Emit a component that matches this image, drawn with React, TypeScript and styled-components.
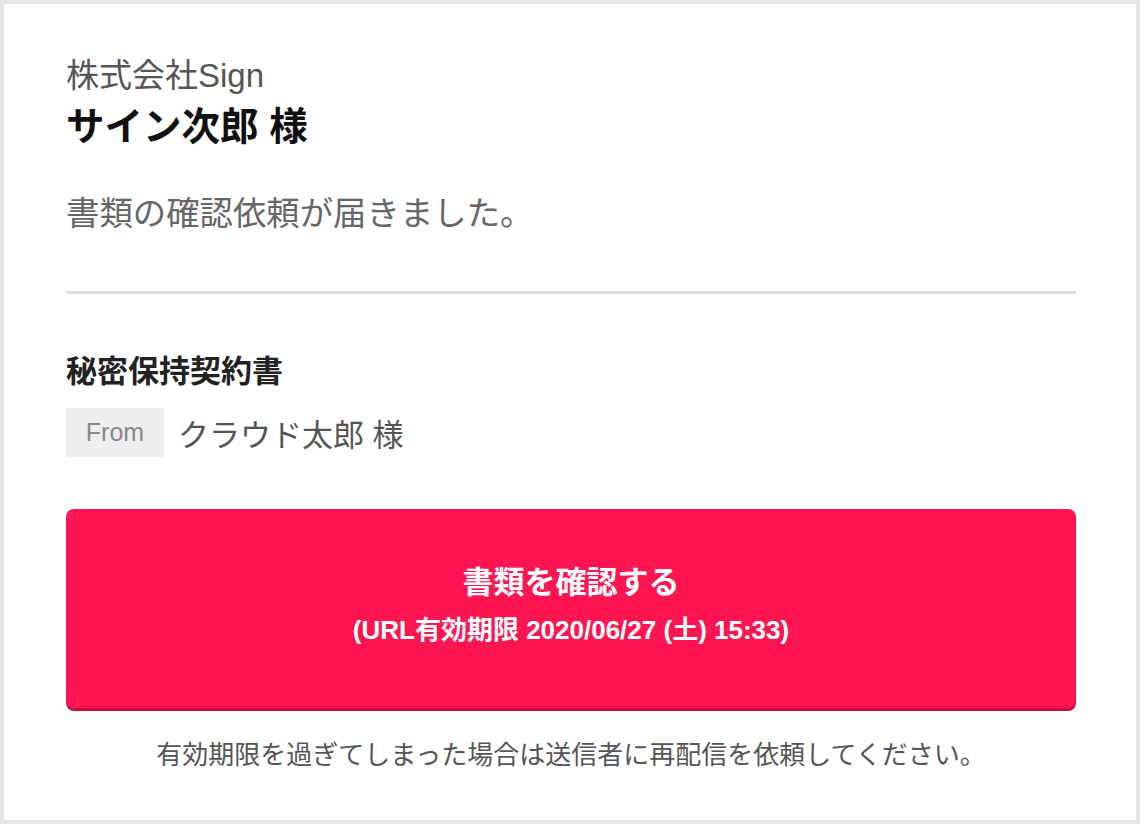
import React from 'react';
import styled, { createGlobalStyle } from 'styled-components';

const GlobalStyle = createGlobalStyle`
  html, body {
    margin: 0;
    padding: 0;
    background: #ffffff;
  }

  body {
    font-family: "Liberation Sans", "Noto Sans CJK JP", sans-serif;
  }
`;

const Frame = styled.div`
  box-sizing: border-box;
  width: 1140px;
  height: 824px;
  border: 4px solid #e6e6e6;
  background: #ffffff;
  padding: 52px 60px 0 62px;
  display: flex;
  flex-direction: column;
`;

const Company = styled.div`
  font-size: 33px;
  line-height: 40px;
  color: #555555;
`;

const Recipient = styled.div`
  margin-top: 9px;
  font-size: 38.5px;
  line-height: 44px;
  font-weight: 700;
  color: #111111;
`;

const Message = styled.div`
  margin-top: 45px;
  font-size: 33.4px;
  line-height: 40px;
  color: #666666;
`;

const Divider = styled.hr`
  margin: 57px 0 0;
  border: none;
  height: 3px;
  background: #dddddd;
`;

const DocTitle = styled.div`
  margin-top: 59px;
  font-size: 31px;
  line-height: 38px;
  font-weight: 700;
  color: #222222;
`;

const SenderRow = styled.div`
  margin-top: 17px;
  display: flex;
  align-items: center;
  gap: 14px;
`;

const Tag = styled.span`
  display: flex;
  align-items: center;
  justify-content: center;
  width: 98px;
  height: 49px;
  background: #eeeeee;
  color: #888888;
  font-size: 25px;
`;

const SenderName = styled.span`
  font-size: 31px;
  color: #555555;
`;

const ConfirmButton = styled.button`
  box-sizing: border-box;
  margin-top: 52px;
  width: 100%;
  height: 199px;
  padding: 54px 0 0;
  border: none;
  border-radius: 8px;
  background: #ff1551;
  box-shadow: 0 3px 0 #c50e3e;
  color: #ffffff;
  font-family: inherit;
  font-weight: 700;
  display: flex;
  flex-direction: column;
  align-items: center;
  gap: 10px;
  cursor: pointer;
`;

const ButtonTitle = styled.span`
  font-size: 31px;
  line-height: 40px;
`;

const ButtonNote = styled.span`
  font-size: 26px;
  line-height: 34px;
`;

const Footnote = styled.p`
  margin: 32px 0 0;
  text-align: center;
  font-size: 26px;
  line-height: 30px;
  color: #555555;
`;

export default function App() {
  return (
    <>
      <GlobalStyle />
      <Frame>
        <Company>株式会社Sign</Company>
        <Recipient>サイン次郎 様</Recipient>
        <Message>書類の確認依頼が届きました。</Message>
        <Divider />
        <DocTitle>秘密保持契約書</DocTitle>
        <SenderRow>
          <Tag>From</Tag>
          <SenderName>クラウド太郎 様</SenderName>
        </SenderRow>
        <ConfirmButton type='button'>
          <ButtonTitle>書類を確認する</ButtonTitle>
          <ButtonNote>(URL有効期限 2020/06/27 (土) 15:33)</ButtonNote>
        </ConfirmButton>
        <Footnote>有効期限を過ぎてしまった場合は送信者に再配信を依頼してください。</Footnote>
      </Frame>
    </>
  );
}
